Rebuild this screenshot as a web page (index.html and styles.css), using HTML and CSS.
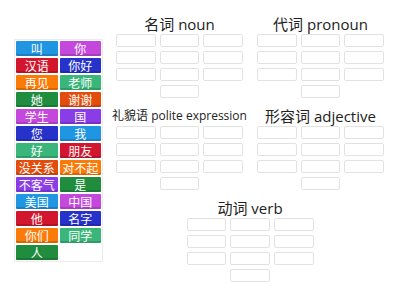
FILE: index.html
```html
<!DOCTYPE html>
<html lang="zh">
<head>
    <meta charset="UTF-8">
    <title>Group sort</title>
    <link rel="stylesheet" href="styles.css">
</head>
<body>
    <div class="bank">
        <div class="tile blue">叫</div>
        <div class="tile magenta">你</div>
        <div class="tile red">汉语</div>
        <div class="tile navy">你好</div>
        <div class="tile orange">再见</div>
        <div class="tile green">老师</div>
        <div class="tile forest">她</div>
        <div class="tile rust">谢谢</div>
        <div class="tile magenta">学生</div>
        <div class="tile violet">国</div>
        <div class="tile navy">您</div>
        <div class="tile blue">我</div>
        <div class="tile green">好</div>
        <div class="tile red">朋友</div>
        <div class="tile rust">没关系</div>
        <div class="tile orange">对不起</div>
        <div class="tile violet">不客气</div>
        <div class="tile forest">是</div>
        <div class="tile blue">美国</div>
        <div class="tile magenta">中国</div>
        <div class="tile red">他</div>
        <div class="tile navy">名字</div>
        <div class="tile orange">你们</div>
        <div class="tile green">同学</div>
        <div class="tile forest">人</div>
    </div>

    <div class="targets">
        <div class="group">
            <div class="group-title">名词 noun</div>
            <div class="slots">
                <div class="slot"></div><div class="slot"></div><div class="slot"></div>
                <div class="slot"></div><div class="slot"></div><div class="slot"></div>
                <div class="slot"></div><div class="slot"></div><div class="slot"></div>
                <div class="slot slot-last"></div>
            </div>
        </div>
        <div class="group">
            <div class="group-title">代词 pronoun</div>
            <div class="slots">
                <div class="slot"></div><div class="slot"></div><div class="slot"></div>
                <div class="slot"></div><div class="slot"></div><div class="slot"></div>
                <div class="slot"></div><div class="slot"></div><div class="slot"></div>
                <div class="slot slot-last"></div>
            </div>
        </div>
        <div class="group">
            <div class="group-title small">礼貌语 polite expression</div>
            <div class="slots">
                <div class="slot"></div><div class="slot"></div><div class="slot"></div>
                <div class="slot"></div><div class="slot"></div><div class="slot"></div>
                <div class="slot"></div><div class="slot"></div><div class="slot"></div>
                <div class="slot slot-last"></div>
            </div>
        </div>
        <div class="group">
            <div class="group-title">形容词 adjective</div>
            <div class="slots">
                <div class="slot"></div><div class="slot"></div><div class="slot"></div>
                <div class="slot"></div><div class="slot"></div><div class="slot"></div>
                <div class="slot"></div><div class="slot"></div><div class="slot"></div>
                <div class="slot slot-last"></div>
            </div>
        </div>
        <div class="group group-wide">
            <div class="group-title">动词 verb</div>
            <div class="slots">
                <div class="slot"></div><div class="slot"></div><div class="slot"></div>
                <div class="slot"></div><div class="slot"></div><div class="slot"></div>
                <div class="slot"></div><div class="slot"></div><div class="slot"></div>
                <div class="slot slot-last"></div>
            </div>
        </div>
    </div>
</body>
</html>
```

FILE: styles.css
```css
body {
    margin: 0;
    height: 300px;
    display: flex;
    font-family: "Open Sans", "Noto Sans CJK SC", sans-serif;
    background: #fff;
    color: #222;
}

.bank {
    align-self: center;
    margin-left: 14px;
    padding: 1px;
    border: 1px solid #ececec;
    display: grid;
    grid-template-columns: 41.5px 41.5px;
    gap: 2px;
    align-content: start;
}

.tile {
    height: 15px;
    line-height: 15px;
    text-align: center;
    color: #fff;
    font-family: "Noto Sans CJK SC", sans-serif;
    font-size: 12px;
    border-radius: 1px;
    box-shadow: inset 0 -2px 0 rgba(0, 0, 0, 0.15);
}

.blue { background: #2095e2; }
.magenta { background: #c548dc; }
.red { background: #d2162e; }
.navy { background: #2632c9; }
.orange { background: #fb7b08; }
.green { background: #3bb67a; }
.forest { background: #1f8c3e; }
.rust { background: #e34d0c; }
.violet { background: #8a3de6; }

.targets {
    margin-left: 13px;
    margin-top: 14px;
    display: grid;
    grid-template-columns: 127px 127px;
    column-gap: 14px;
    row-gap: 8px;
    align-content: start;
}

.group-wide {
    grid-column: 1 / span 2;
    justify-self: center;
    width: 127px;
}

.group-title {
    height: 20px;
    line-height: 20px;
    font-size: 15px;
    text-align: center;
    white-space: nowrap;
}

.group-title.small {
    font-size: 12px;
    margin: 0 -4px;
}

.slots {
    display: grid;
    grid-template-columns: repeat(3, 1fr);
    gap: 4px;
}

.slot {
    height: 13px;
    box-sizing: border-box;
    border: 1px solid #e2e2e2;
    border-radius: 2px;
}

.slot-last {
    grid-column: 2;
}
```
